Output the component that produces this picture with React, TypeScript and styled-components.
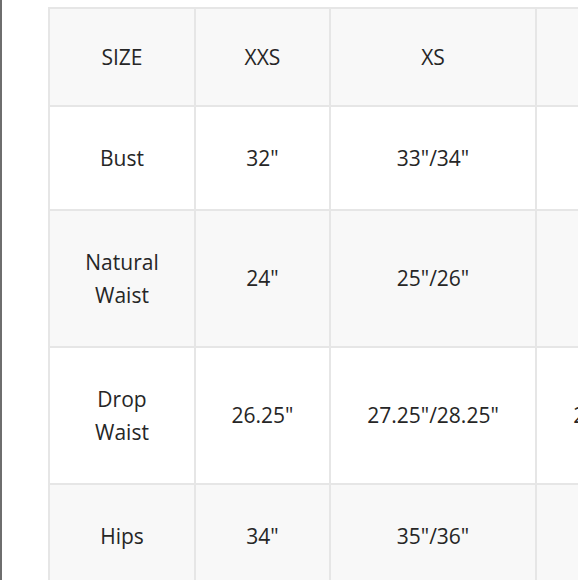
import styled, { createGlobalStyle } from 'styled-components';

const GlobalStyle = createGlobalStyle`
  html, body {
    margin: 0;
    padding: 0;
    background: #ffffff;
    overflow: hidden;
  }
`;

const Page = styled.div`
  width: 578px;
  height: 580px;
  border-left: 2px solid #6e6e6e;
  overflow: hidden;
  padding: 7px 0 0 46px;
  box-sizing: border-box;
`;

const Table = styled.table`
  border-collapse: separate;
  border-spacing: 0;
  table-layout: fixed;
  width: 695px;
  border-top: 2px solid #e6e6e6;
  border-left: 2px solid #e6e6e6;
  font-family: 'Open Sans', 'Noto Sans', sans-serif;
  font-size: 21px;
  line-height: 33px;
  color: #262626;
`;

const Row = styled.tr<{ $shaded: boolean; $height: number }>`
  height: ${(p) => p.$height}px;
  background: ${(p) => (p.$shaded ? '#f8f8f8' : '#ffffff')};
`;

const Cell = styled.td`
  padding: 0 8px;
  text-align: center;
  vertical-align: middle;
  border-right: 2px solid #e6e6e6;
  border-bottom: 2px solid #e6e6e6;
  white-space: nowrap;
`;

const Label = styled(Cell)`
  white-space: normal;
`;

const widths = [146, 135, 206, 206];

const rows: { label: string[]; values: string[]; height: number }[] = [
  { label: ['SIZE'], values: ['XXS', 'XS', 'S'], height: 98 },
  { label: ['Bust'], values: ['32"', '33"/34"', '35"/36"'], height: 104 },
  { label: ['Natural', 'Waist'], values: ['24"', '25"/26"', '27"/28"'], height: 137 },
  { label: ['Drop', 'Waist'], values: ['26.25"', '27.25"/28.25"', '29.25"/30.25"'], height: 137 },
  { label: ['Hips'], values: ['34"', '35"/36"', '37"/38"'], height: 104 },
];

export default function App() {
  return (
    <>
      <GlobalStyle />
      <Page>
        <Table>
          <colgroup>
            {widths.map((w, i) => (
              <col key={i} style={{ width: w }} />
            ))}
          </colgroup>
          <tbody>
            {rows.map((r, i) => (
              <Row key={i} $shaded={i % 2 === 0} $height={r.height}>
                <Label>
                  {r.label.map((l, j) => (
                    <div key={j}>{l}</div>
                  ))}
                </Label>
                {r.values.map((v, j) => (
                  <Cell key={j}>{v}</Cell>
                ))}
              </Row>
            ))}
          </tbody>
        </Table>
      </Page>
    </>
  );
}
